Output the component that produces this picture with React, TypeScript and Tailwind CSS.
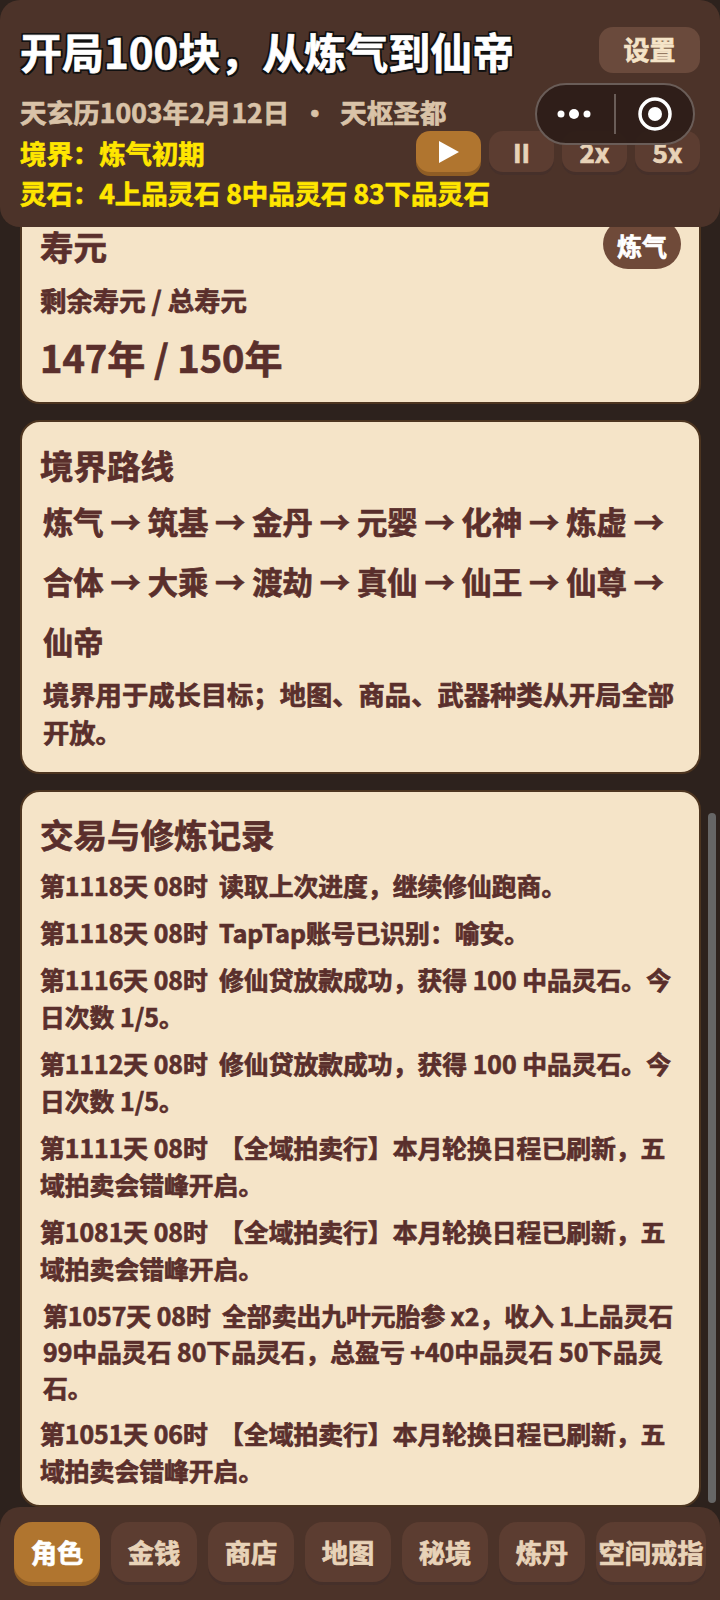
const fontCjk = "font-['Noto_Sans_CJK_SC','Noto_Sans',sans-serif]";

const routeLines = [
  ["炼气", "筑基", "金丹", "元婴", "化神", "炼虚"],
  ["合体", "大乘", "渡劫", "真仙", "仙王", "仙尊"],
];

const logs = [
  { text: "第1118天 08时  读取上次进度，继续修仙跑商。" },
  { text: "第1118天 08时  TapTap账号已识别：喻安。" },
  { text: "第1116天 08时  修仙贷放款成功，获得 100 中品灵石。今日次数 1/5。" },
  { text: "第1112天 08时  修仙贷放款成功，获得 100 中品灵石。今日次数 1/5。" },
  { text: "第1111天 08时  【全域拍卖行】本月轮换日程已刷新，五域拍卖会错峰开启。" },
  { text: "第1081天 08时  【全域拍卖行】本月轮换日程已刷新，五域拍卖会错峰开启。" },
  { text: "第1057天 08时  全部卖出九叶元胎参 x2，收入 1上品灵石 99中品灵石 80下品灵石，总盈亏 +40中品灵石 50下品灵石。", inset: true },
  { text: "第1051天 06时  【全域拍卖行】本月轮换日程已刷新，五域拍卖会错峰开启。" },
];

const tabs = ["角色", "金钱", "商店", "地图", "秘境", "炼丹", "空间戒指"];

function SpeedButton({ label, active }: { label: React.ReactNode; active?: boolean }) {
  return (
    <div
      className={
        active
          ? "flex h-[41px] w-[65px] items-center justify-center rounded-[14px] bg-[#b0752f] shadow-[0_4px_0_#8f5d25]"
          : "flex h-[41px] w-[65px] items-center justify-center rounded-[14px] bg-[#5c3d31] text-[26px] text-[#e8d3b8] shadow-[0_3px_0_#46302a]"
      }
    >
      {label}
    </div>
  );
}

function Header() {
  return (
    <header className="relative z-10 h-[227px] shrink-0 rounded-[20px] bg-[#4c3329] pl-5 pr-5 pt-[25px]">
      <div className="flex items-start justify-between">
        <h1 className="text-[42px] leading-[52px] whitespace-nowrap text-white [text-shadow:-2px_0_0_#111,2px_0_0_#111,0_-2px_0_#111,0_2px_0_#111,2px_2px_0_#111,-2px_2px_0_#111,2px_-2px_0_#111,-2px_-2px_0_#111]">
          开局100块，从炼气到仙帝
        </h1>
        <button className="mt-[2px] h-[46px] w-[101px] rounded-[14px] bg-[#6a4a3c] pb-[3px] text-[26px] text-[#f5e4c8]">
          设置
        </button>
      </div>
      <p className="mt-[17px] text-[26.6px] leading-[36px] whitespace-pre text-[#d9c3a8]">天玄历1003年2月12日  •  天枢圣都</p>
      <div className="flex items-start justify-between">
        <p className="mt-[5px] text-[26.4px] leading-[36px] text-[#ffe600]">境界：炼气初期</p>
        <div className="mt-[1px] flex gap-2">
          <SpeedButton
            active
            label={
              <svg width="22" height="24" viewBox="0 0 22 24">
                <path d="M1 1 L21 12 L1 23 Z" fill="#fff" />
              </svg>
            }
          />
          <SpeedButton label="II" />
          <SpeedButton label="2x" />
          <SpeedButton label="5x" />
        </div>
      </div>
      <p className="mt-[3px] text-[26.4px] leading-[36px] text-[#ffe600]">灵石：4上品灵石 8中品灵石 83下品灵石</p>

      {/* host capsule floats over the header */}
      <div className="absolute top-[83px] right-[25px] flex h-[62px] w-[160px] items-center rounded-full border-2 border-[#6a5d58] bg-[#2d1e18]/95">
        <div className="flex w-[77px] shrink-0 items-center pl-[19px]">
          <svg width="36" height="12" viewBox="0 0 36 12" fill="#fff">
            <circle cx="5" cy="6" r="3.5" />
            <circle cx="18" cy="6" r="5" />
            <circle cx="31" cy="6" r="3.5" />
          </svg>
        </div>
        <div className="h-10 w-0.5 bg-[#6a5d58]" />
        <div className="flex flex-1 items-center justify-center">
          <svg width="36" height="36" viewBox="0 0 36 36">
            <circle cx="18" cy="18" r="15" fill="none" stroke="#fff" strokeWidth="3.5" />
            <circle cx="18" cy="18" r="7" fill="#fff" />
          </svg>
        </div>
      </div>
    </header>
  );
}

function Card({ children }: { children: React.ReactNode }) {
  return (
    <section className="rounded-[20px] border-2 border-[#4d3520] bg-[#f5e4c8] pr-[20px] pl-[18px] text-[#5a2f2c]">
      {children}
    </section>
  );
}

export default function App() {
  return (
    <div className={`flex h-[1600px] w-[720px] flex-col overflow-hidden bg-[#2d221d] font-bold [-webkit-text-stroke:0.7px] ${fontCjk}`}>
      <Header />

      <main className="relative min-h-0 flex-1 overflow-hidden">
        <div className="-mt-[24px] flex flex-col gap-4 pr-[19px] pl-[20px]">
          <Card>
            <div className="flex items-start justify-between pt-[19px]">
              <h2 className="text-[33.5px] leading-[44px]">寿元</h2>
              <span className="-mt-[5px] -mr-[2px] flex h-[50px] w-[78px] items-center justify-center rounded-full bg-[#6f4a39] pt-[3px] text-[25px] text-white">
                炼气
              </span>
            </div>
            <p className="mt-[12px] text-[26.4px] leading-[38px]">剩余寿元 / 总寿元</p>
            <p className="mt-[9px] pb-[16px] text-[38px] leading-[58px]">147年 / 150年</p>
          </Card>

          <Card>
            <h2 className="pt-[21px] text-[33.5px] leading-[44px]">境界路线</h2>
            <div className="px-[3px] pt-[4px] pb-[21px]">
              {routeLines.map((line, i) => (
                <p key={i} className="text-[30.3px] leading-[60px] whitespace-nowrap">
                  {line.map((name) => `${name} → `).join("")}
                </p>
              ))}
              <p className="text-[30.3px] leading-[60px]">仙帝</p>
              <p className="mt-[4px] text-[26.3px] leading-[38px]">
                境界用于成长目标；地图、商品、武器种类从开局全部开放。
              </p>
            </div>
          </Card>

          <Card>
            <h2 className="pt-[19px] text-[33.5px] leading-[46px]">交易与修炼记录</h2>
            <div className="flex flex-col gap-[10px] pt-[10px] pb-[16px]">
              {logs.map((log, i) => (
                <p
                  key={i}
                  className={
                    log.inset
                      ? "px-[3px] text-[24.8px] leading-[36px] whitespace-pre-wrap"
                      : "text-[24.8px] leading-[37px] whitespace-pre-wrap"
                  }
                >
                  {log.text}
                </p>
              ))}
            </div>
          </Card>
        </div>

        {/* scrollbar thumb */}
        <div className="absolute top-[586px] right-1 h-[690px] w-2 rounded-full bg-[#666]" />
      </main>

      <nav className="relative z-10 -mt-[1px] flex h-[93px] shrink-0 gap-[11px] rounded-t-[20px] bg-[#4c3329] pt-[15px] pl-[14px]">
        {tabs.map((tab, i) => (
          <div
            key={tab}
            className={
              i === 0
                ? "flex h-[60px] w-[86px] items-center justify-center rounded-[18px] bg-[#b0752f] text-[26.3px] text-white shadow-[0_4px_0_#8f5d25]"
                : i === tabs.length - 1
                  ? "flex h-[60px] w-[110px] items-center justify-center rounded-[18px] bg-[#5c3d31] text-[26.3px] whitespace-nowrap text-[#e8d3b8] shadow-[0_3px_0_#46302a]"
                  : "flex h-[60px] w-[86px] items-center justify-center rounded-[18px] bg-[#5c3d31] text-[26.3px] text-[#e8d3b8] shadow-[0_3px_0_#46302a]"
            }
          >
            {tab}
          </div>
        ))}
      </nav>
    </div>
  );
}
